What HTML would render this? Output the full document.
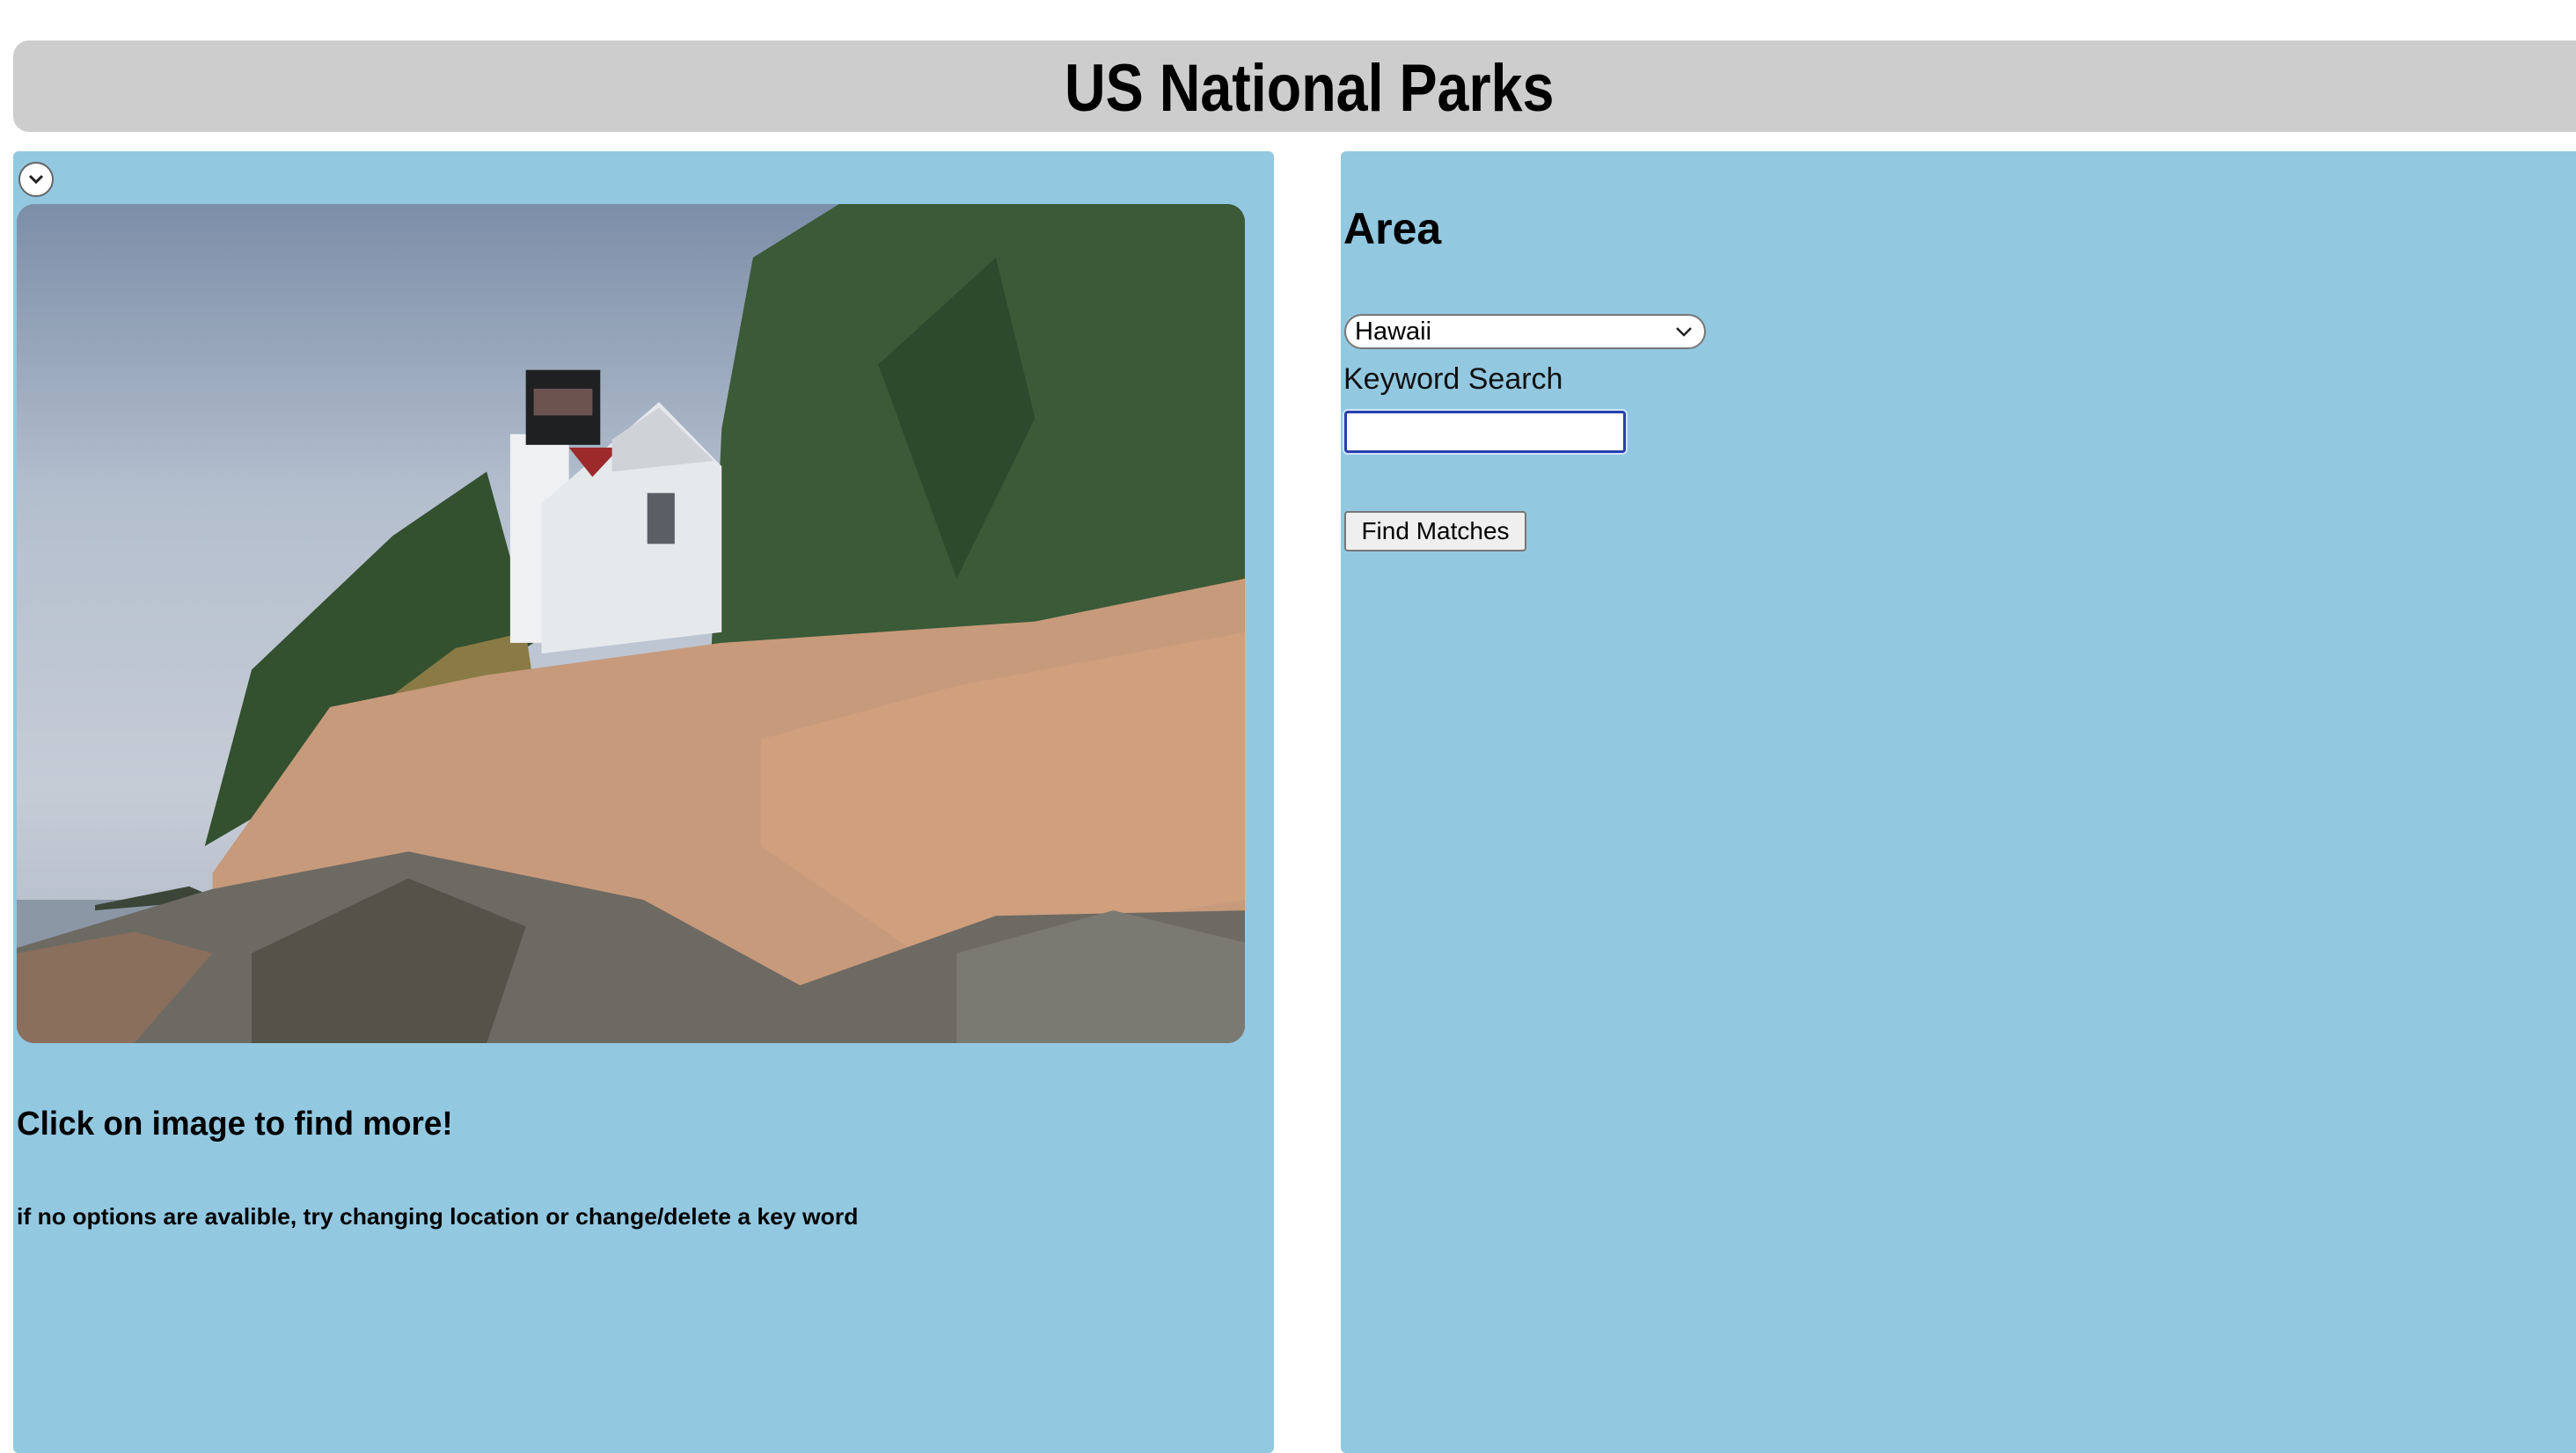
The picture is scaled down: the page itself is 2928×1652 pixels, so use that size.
<!DOCTYPE html>
<html><head><meta charset="utf-8"><style>
*{margin:0;padding:0;box-sizing:border-box}
html,body{width:2928px;height:1626px;overflow:hidden;background:#fff;font-family:"Liberation Sans",sans-serif}
.hdr{position:absolute;left:15px;top:46px;width:2940px;height:104px;background:#cdcdcd;border-radius:18px}
.title{position:absolute;left:1210px;top:58px;width:560px;font-size:76px;font-weight:bold;line-height:86px;white-space:nowrap;color:#000}
.sq{display:inline-block;transform-origin:0 0}
.lp{position:absolute;left:15px;top:172px;width:1433px;height:1480px;background:#93c8e1;border-radius:6px}
.rp{position:absolute;left:1524px;top:172px;width:1420px;height:1480px;background:#93c8e1;border-radius:6px}
.tog{position:absolute;left:21px;top:184px;width:40px;height:40px;border-radius:50%;background:#fff;border:2px solid #666}
.img{position:absolute;left:19px;top:232px;width:1396px;height:954px;border-radius:20px;overflow:hidden}
.t{position:absolute;white-space:nowrap;color:#000;font-weight:bold}
</style></head><body>
<div class="hdr"></div>
<div class="title"><span class="sq" style="transform:scaleX(0.85)">US National Parks</span></div>
<div class="lp"></div>
<div class="rp"></div>
<div class="tog"><svg width="36" height="36" viewBox="0 0 36 36"><path d="M11 14 L18 21 L25 14" fill="none" stroke="#222" stroke-width="3"/></svg></div>
<div class="img"><svg width="1396" height="954" viewBox="0 0 1568 1568" preserveAspectRatio="none">
<defs><linearGradient id="sky" x1="0" y1="0" x2="0" y2="1"><stop offset="0" stop-color="#7c8ea8"/><stop offset="0.35" stop-color="#b4bfce"/><stop offset="0.7" stop-color="#c6ccd6"/><stop offset="1" stop-color="#a9b4c2"/></linearGradient></defs>
<rect width="1568" height="1568" fill="url(#sky)"/>
<rect x="0" y="1300" width="300" height="90" fill="#8b97a5"/>
<polygon points="100,1310 220,1275 260,1300 100,1320" fill="#3c4638"/>
<polygon points="240,1200 300,870 480,620 600,500 660,820 450,1020" fill="#33502f"/>
<polygon points="880,1050 900,420 940,100 1050,0 1568,0 1568,700 1300,850" fill="#3b5a37"/>
<polygon points="1100,300 1250,100 1300,400 1200,700" fill="#2e4a2c"/>
<polygon points="450,950 560,830 650,800 660,900 470,1000" fill="#8a7a45"/>
<rect x="630" y="430" width="75" height="390" fill="#eef0f2"/>
<rect x="650" y="310" width="95" height="140" fill="#1e2022"/>
<rect x="660" y="345" width="75" height="50" fill="#6b5450"/>
<polygon points="670,560 820,370 900,490 900,800 670,840" fill="#e6e9ec"/>
<polygon points="705,455 770,455 735,510" fill="#9c2a2a"/>
<polygon points="760,440 820,380 890,480 760,500" fill="#cfd3d8"/>
<rect x="805" y="540" width="35" height="95" fill="#5a5f66"/>
<polygon points="250,1568 250,1250 400,940 600,880 900,820 1300,780 1568,700 1568,1568" fill="#c79a7c"/>
<polygon points="950,1000 1200,900 1568,800 1568,1300 1150,1400 950,1200" fill="#cf9f7e"/>
<polygon points="0,1390 250,1280 500,1210 800,1300 1000,1460 1250,1330 1568,1320 1568,1568 0,1568" fill="#6d6a63"/>
<polygon points="300,1400 500,1260 650,1350 600,1568 300,1568" fill="#555249"/>
<polygon points="1200,1400 1400,1320 1568,1380 1568,1568 1200,1568" fill="#7b7a72"/>
<polygon points="0,1400 150,1360 250,1400 150,1568 0,1568" fill="#8a6f5c"/>
</svg></div>
<div class="t" style="left:19px;top:1256px;font-size:38px;line-height:44px"><span class="sq" style="transform:scaleX(0.97)">Click on image to find more!</span></div>
<div class="t" style="left:19px;top:1368px;font-size:26px;line-height:30px"><span class="sq" style="transform:scaleX(1.02)">if no options are avalible, try changing location or change/delete a key word</span></div>
<div class="t" style="left:1527px;top:232px;font-size:50px;line-height:56px">Area</div>
<div style="position:absolute;left:1528px;top:357px;width:411px;height:40px;border:2px solid #777;border-radius:20px;background:#fff;font-size:29px;line-height:36px;padding-left:10px">Hawaii
<svg style="position:absolute;right:12px;top:10px" width="22" height="16" viewBox="0 0 22 16"><path d="M3 4 L11 12 L19 4" fill="none" stroke="#222" stroke-width="2.5"/></svg></div>
<div style="position:absolute;left:1527px;top:410px;font-size:34px;line-height:42px;color:#111;white-space:nowrap">Keyword Search</div>
<div style="position:absolute;left:1528px;top:467px;width:320px;height:48px;border:3px solid #2a3fb0;border-radius:4px;background:#fff;box-shadow:0 0 0 2px #cfe4f5"></div>
<div style="position:absolute;left:1528px;top:581px;width:207px;height:46px;border:2px solid #777;border-radius:4px;background:#efefef;font-size:28px;line-height:42px;text-align:center;white-space:nowrap">Find Matches</div>
</body></html>
